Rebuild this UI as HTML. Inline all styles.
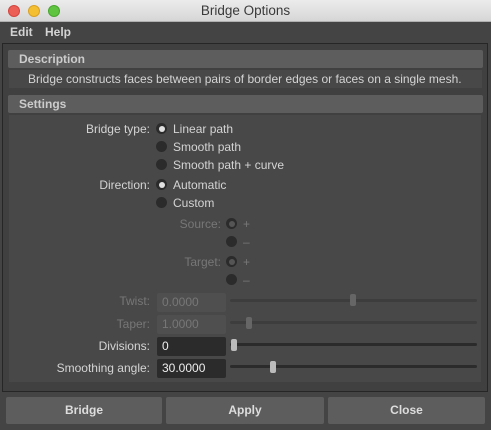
<!DOCTYPE html>
<html><head><style>
*{margin:0;padding:0;box-sizing:border-box}
body{width:491px;height:430px;background:#444;font-family:"Liberation Sans",sans-serif;font-size:12px;color:#d4d4d4;position:relative;overflow:hidden}
.a{position:absolute}
.title{left:0;top:0;width:491px;height:22px;background:linear-gradient(#ececec,#d6d6d6);border-bottom:1px solid #b0b0b0;color:#3a3a3a;font-size:13.5px;text-align:center;line-height:22px}
.dot{top:5px;width:12px;height:12px;border-radius:50%}
.frame{left:2px;top:43px;width:486px;height:349px;border:1px solid #262626;background:#404040}
.hdr{background:#5d5d5d;height:18px;border-radius:2px;font-weight:bold;color:#ccc;line-height:18px;padding-left:11px}
.lbl{text-align:right;width:150px;left:0}
.dis{color:#777}
.rad{width:11px;height:11px;border-radius:50%;background:#2b2b2b}
.rad.on::after{content:"";position:absolute;left:2.5px;top:2.5px;width:6px;height:6px;border-radius:50%;background:#e0e0e0}
.rad.d.on::after{background:#555}
.fld{left:157px;width:69px;height:19px;line-height:19px;padding-left:5px;border-radius:2px}
.trk{left:230px;width:247px;height:3px;border-radius:2px}
.th{width:6px;height:12px;border-radius:2px}
.btn{top:397px;height:27px;background:#5d5d5d;border-radius:2px;text-align:center;line-height:27px;font-weight:bold;color:#ddd}
</style></head><body>
<div class="a title">Bridge Options</div>
<div class="a dot" style="left:8px;background:#ec5f57;border:1px solid #d2463f"></div>
<div class="a dot" style="left:28px;background:#f4bf30;border:1px solid #d9a125"></div>
<div class="a dot" style="left:48px;background:#5fc43f;border:1px solid #4aa530"></div>
<div class="a" style="left:10px;top:25px;font-weight:bold">Edit</div>
<div class="a" style="left:45px;top:25px;font-weight:bold">Help</div>
<div class="a frame"></div>
<div class="a hdr" style="left:8px;top:50px;width:475px">Description</div>
<div class="a" style="left:9px;top:70px;width:473px;height:18px;background:#484848;line-height:18px;padding-left:19px">Bridge constructs faces between pairs of border edges or faces on a single mesh.</div>
<div class="a hdr" style="left:8px;top:95px;width:475px">Settings</div>
<div class="a" style="left:9px;top:115px;width:472px;height:267px;background:#484848"></div>

<div class="a lbl" style="top:122px">Bridge type:</div>
<div class="a rad on" style="left:156px;top:123px"></div><div class="a" style="left:173px;top:122px">Linear path</div>
<div class="a rad" style="left:156px;top:141px"></div><div class="a" style="left:173px;top:140px">Smooth path</div>
<div class="a rad" style="left:156px;top:159px"></div><div class="a" style="left:173px;top:158px">Smooth path + curve</div>
<div class="a lbl" style="top:178px">Direction:</div>
<div class="a rad on" style="left:156px;top:179px"></div><div class="a" style="left:173px;top:178px">Automatic</div>
<div class="a rad" style="left:156px;top:197px"></div><div class="a" style="left:173px;top:196px">Custom</div>
<div class="a lbl dis" style="top:217px;width:221px">Source:</div>
<div class="a rad d on" style="left:226px;top:218px"></div><div class="a dis" style="left:243px;top:217px">+</div>
<div class="a rad" style="left:226px;top:236px"></div><div class="a dis" style="left:243px;top:235px">–</div>
<div class="a lbl dis" style="top:255px;width:221px">Target:</div>
<div class="a rad d on" style="left:226px;top:256px"></div><div class="a dis" style="left:243px;top:255px">+</div>
<div class="a rad" style="left:226px;top:274px"></div><div class="a dis" style="left:243px;top:273px">–</div>

<div class="a lbl dis" style="top:294px">Twist:</div>
<div class="a fld dis" style="top:293px;background:#4f4f4f">0.0000</div>
<div class="a trk" style="top:299px;background:#3d3d3d"></div>
<div class="a th" style="left:350px;top:294px;background:#666"></div>
<div class="a lbl dis" style="top:317px">Taper:</div>
<div class="a fld dis" style="top:315px;background:#4f4f4f">1.0000</div>
<div class="a trk" style="top:321px;background:#3d3d3d"></div>
<div class="a th" style="left:246px;top:317px;background:#666"></div>
<div class="a lbl" style="top:339px">Divisions:</div>
<div class="a fld" style="top:337px;background:#2b2b2b;color:#eee">0</div>
<div class="a trk" style="top:343px;background:#2b2b2b"></div>
<div class="a th" style="left:231px;top:339px;background:#bbb"></div>
<div class="a lbl" style="top:361px">Smoothing angle:</div>
<div class="a fld" style="top:359px;background:#2b2b2b;color:#eee">30.0000</div>
<div class="a trk" style="top:365px;background:#2b2b2b"></div>
<div class="a th" style="left:270px;top:361px;background:#bbb"></div>

<div class="a btn" style="left:6px;width:156px">Bridge</div>
<div class="a btn" style="left:166px;width:158px">Apply</div>
<div class="a btn" style="left:328px;width:157px">Close</div>
</body></html>
